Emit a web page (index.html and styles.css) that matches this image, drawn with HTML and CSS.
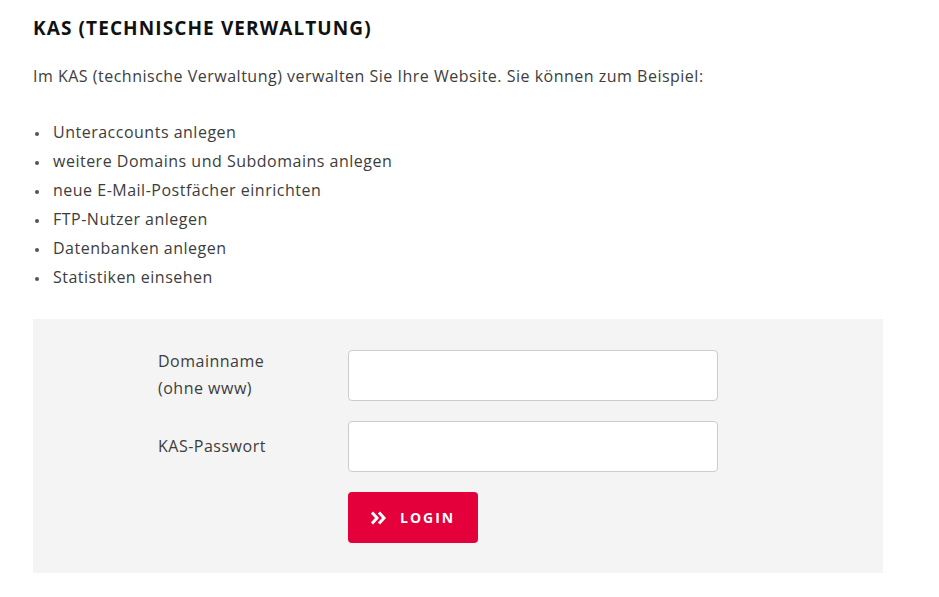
FILE: index.html
```html
<!DOCTYPE html>
<html lang="de">
<head>
    <meta charset="UTF-8">
    <meta name="viewport" content="width=device-width, initial-scale=1.0">
    <title>KAS Login</title>
    <link rel="stylesheet" href="styles.css">
</head>
<body>
    <div class="content">
        <h1>KAS (TECHNISCHE VERWALTUNG)</h1>
        <p class="intro">Im KAS (technische Verwaltung) verwalten Sie Ihre Website. Sie können zum Beispiel:</p>

        <ul class="features">
            <li>Unteraccounts anlegen</li>
            <li>weitere Domains und Subdomains anlegen</li>
            <li>neue E-Mail-Postfächer einrichten</li>
            <li>FTP-Nutzer anlegen</li>
            <li>Datenbanken anlegen</li>
            <li>Statistiken einsehen</li>
        </ul>

        <form class="login-box" onsubmit="return false;">
            <div class="row">
                <label for="domain">Domainname<br>(ohne www)</label>
                <input type="text" id="domain">
            </div>
            <div class="row">
                <label for="password">KAS-Passwort</label>
                <input type="password" id="password">
            </div>
            <div class="row row-submit">
                <span class="spacer"></span>
                <button type="submit" class="btn-login">
                    <svg width="17" height="14" viewBox="0 0 17 14" aria-hidden="true">
                        <path d="M2 1.5 L7 7 L2 12.5 M9 1.5 L14 7 L9 12.5" fill="none" stroke="#fff" stroke-width="3"/>
                    </svg>
                    LOGIN
                </button>
            </div>
        </form>
    </div>
</body>
</html>
```

FILE: styles.css
```css
body {
    margin: 0;
    background-color: #ffffff;
    color: #3d3d3d;
    font-family: "Open Sans", "Liberation Sans", sans-serif;
    font-size: 16px;
    letter-spacing: 0.5px;
}

.content {
    padding: 15px 33px 0 33px;
    width: 850px;
}

h1 {
    margin: 0;
    font-size: 19px;
    line-height: 26px;
    font-weight: bold;
    letter-spacing: 1.1px;
    color: #111111;
}

.intro {
    margin: 23px 0 0 0;
    line-height: 24px;
}

.features {
    list-style: none;
    margin: 30px 0 0 0;
    padding: 0;
}

.features li {
    line-height: 29px;
    padding-left: 20px;
    position: relative;
}

.features li::before {
    content: "";
    position: absolute;
    left: 2px;
    top: 14px;
    width: 4px;
    height: 4px;
    border-radius: 50%;
    background-color: #555555;
}

.login-box {
    margin-top: 27px;
    background-color: #f4f4f4;
    padding: 29px 0 30px 125px;
    display: flex;
    flex-direction: column;
    gap: 19px;
}

.row {
    display: flex;
    align-items: center;
}

.row-submit {
    margin-top: 1px;
}

.row label,
.spacer {
    width: 190px;
    line-height: 27px;
}

.row input {
    width: 370px;
    height: 51px;
    box-sizing: border-box;
    border: 1px solid #cccccc;
    border-radius: 4px;
    background-color: #ffffff;
    padding: 0 12px;
    font-size: 16px;
}

.btn-login {
    display: flex;
    align-items: center;
    gap: 13px;
    height: 51px;
    width: 130px;
    padding: 0 0 0 22px;
    border: none;
    border-radius: 4px;
    background-color: #e4003b;
    color: #ffffff;
    font-family: "Open Sans", "Liberation Sans", sans-serif;
    font-size: 14px;
    font-weight: bold;
    letter-spacing: 2px;
    cursor: pointer;
}
```
